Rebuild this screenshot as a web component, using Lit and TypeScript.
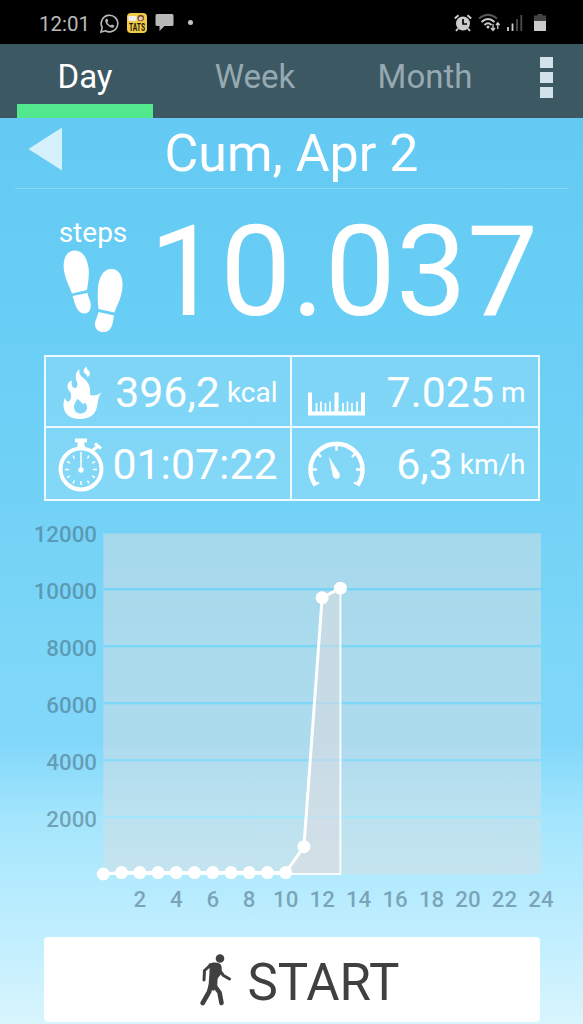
import { LitElement, html, svg, css } from 'lit';
import { customElement, property, state } from 'lit/decorators.js';
import { classMap } from 'lit/directives/class-map.js';

const TABS = ['Day', 'Week', 'Month'];

const ICONS = {
    fire: svg`
        <path fill="#fff" fill-rule="evenodd" d="M33.500 12C32.500 17 35 19 38 21.500C42 25 45 29 44 38C48 39 52 38 55.700 35.500C52.500 39 52 43 51.500 47C50.500 57 44 62 34 62C23 62 17.500 56 17.500 48C17.500 45 18 43 19 40.700C19.500 43 20.500 44.500 22 44.500C24.500 44 25.500 41 25 37C24.500 34 21.500 33 21.500 29.500C21.500 26 23.500 24.500 26 23.500C25 27 26 30.500 28.500 31C31.500 31 32 28 31 25C28.500 20 29.500 15 33.500 12ZM31 42C30.500 45 28 46 28 50C28 54 30.500 56.500 34.500 56.500C38.500 56.500 41 54 41 50.500C41 48 40 46.500 38.500 45.500C38 47 37 47.500 36 46.500C35 44.500 33.500 43 31 42Z"/>
        <path fill="#fff" d="M40.500 9.500C37 12 37 15 39.500 17C41 18.200 41.500 19 41.500 20.500C44.500 18 44.500 15.500 42.500 13.500C41 12 40.500 11 40.500 9.500Z"/>`,
    ruler: svg`
        <path d="M18 35.500V56.500H71V35.500M44.500 35.500V56" fill="none" stroke="#fff" stroke-width="4"/>
        <path d="M24.500 46v10M29 44.500v11M33.500 46v10M38 44.500v11M51 46v10M55.500 44.500v11M60 46v10M65 44.500v11" fill="none" stroke="#fff" stroke-width="1.700"/>`,
    watch: svg`
        <circle cx="35" cy="40" r="20.500" fill="none" stroke="#fff" stroke-width="4"/>
        <path d="M29 9.500h12v4h-3l1 5h-8l1-5h-3z" fill="#fff"/>
        <path d="M46 22l6-5M49 14.500l6 5" stroke="#fff" stroke-width="3" fill="none"/>
        <path d="M35 23v17M35 56v-4M19 40.500h4M51 40.500h-4M27 26.500l1.500 3M43 26.500l-1.500 3M27 54.500l1.500-3M43 54.500l-1.500-3M21 32.500l3 1.700M49 32.500l-3 1.700M21 48.500l3-1.700M49 48.500l-3-1.700" stroke="#fff" stroke-width="1.500" fill="none"/>
        <circle cx="35" cy="41" r="2.700" fill="#fff"/>`,
    gauge: svg`
        <path d="M23.500 56A26 26 0 1 1 65.500 56" fill="none" stroke="#fff" stroke-width="4.500"/>
        <path d="M44.500 15.500v6M25 23.500l4 4.500M64 23.500l-4 4.500M18 40.500h7M71 40.500h-7M21 56.500l6-3M68 56.500l-6-3" stroke="#fff" stroke-width="2.500" fill="none"/>
        <path d="M36.800 27.500l10.700 17c2 5-4 7.500-6.500 3z" fill="#fff"/>`,
};

interface IStat {
    icon: keyof typeof ICONS;
    value: string;
    unit: string;
}

@customElement('status-bar')
export class StatusBar extends LitElement {
    static override styles = css`
        :host {
            display: flex;
            align-items: center;
            height: 44px;
            padding: 2px 37px 0 39px;
            box-sizing: border-box;
            background: #000;
            color: #b9b9b9;
            font: 20.5px/42px Roboto, sans-serif;
        }
        .time {
            width: 61px;
            padding-top: 2px;
        }
        svg {
            flex: none;
            display: block;
            overflow: visible;
        }
        .badge {
            font: bold 10px Roboto, sans-serif;
        }
        .gap {
            margin-left: 8px;
        }
        .gap-s {
            margin-left: 7px;
        }
        .fill {
            flex: 1;
        }
    `;

    override render() {
        return html`
            <span class="time">12:01</span>
            <svg width="19" height="19" viewBox="0 0 19 19">
                <path d="M1 18l1.200-4.400A8.300 8.300 0 1 1 5.400 16.800z" fill="none" stroke="#b9b9b9" stroke-width="1.600"/>
                <path d="M6.300 4.800c-2 1.300-.8 4.300 1.400 6.500s5 3.400 6.400 1.500c.4-.7.300-1.200 0-1.400l-2-1c-.6-.2-1 1.100-1.500 1-1.400-.5-2.600-1.700-3.200-3 0-.5 1-1 .8-1.600l-.8-1.800c-.2-.4-.8-.4-1.100-.2z" fill="#b9b9b9"/>
            </svg>
            <svg class="gap" width="20" height="20" viewBox="0 0 20 20">
                <rect width="20" height="20" rx="4" fill="#f0cb4a"/>
                <path d="M1.500 3h8v5h-8z" fill="#eee"/>
                <circle cx="13.700" cy="5" r="3.300" fill="#7d5230"/>
                <circle cx="13.700" cy="5.500" r="1.900" fill="#e9cfc0"/>
                <text class="badge" x="2" y="17.500" textLength="16" lengthAdjust="spacingAndGlyphs" fill="#1c1608">TATS</text>
            </svg>
            <svg class="gap" width="19" height="18" viewBox="0 0 19 18">
                <path d="M2 0h15q1.500 0 1.500 1.500v9q0 1.500-1.500 1.500H9.500L4.500 17V12H2Q.5 12 .5 10.500v-9Q.5 0 2 0z" fill="#b9b9b9"/>
            </svg>
            <svg width="34" height="18" viewBox="0 0 34 18"><circle cx="16.500" cy="8.500" r="2.500" fill="#c4c4c4"/></svg>
            <span class="fill"></span>
            <svg width="18" height="18" viewBox="0 0 18 18">
                <circle cx="9" cy="9.500" r="7" fill="#ccc"/>
                <path d="M9 5v5h4" fill="none" stroke="#000" stroke-width="1.700"/>
                <path d="M.8 4.500L4.500 1.200M17.200 4.500L13.500 1.200M4 14.500l-2 2.500M14 14.500l2 2.500" stroke="#ccc" stroke-width="2"/>
            </svg>
            <svg class="gap-s" width="21" height="18" viewBox="0 0 21 18">
                <path d="M0 4.500Q9 -3 18 4.500" fill="none" stroke="#555" stroke-width="1.800"/>
                <path d="M2.500 8Q9 2 15.500 8M5.500 11Q9 7.500 12.500 11" fill="none" stroke="#ccc" stroke-width="1.800"/>
                <circle cx="9" cy="13" r="1.500" fill="#ccc"/>
                <path d="M14 10v6M12 14l2 2.500 2-2.500M18.800 15V9M17 11l1.800-2.300L20.600 11" fill="none" stroke="#ccc" stroke-width="1.300"/>
            </svg>
            <svg class="gap-s" width="16" height="18" viewBox="0 0 16 18">
                <path d="M1 17v-4M5.500 17V9.500" stroke="#ccc" stroke-width="1.800"/>
                <path d="M10 17V5M14.300 17V1" stroke="#4c4c4c" stroke-width="1.800"/>
            </svg>
            <svg class="gap-s" width="16" height="18" viewBox="0 0 16 18">
                <path d="M7.500 0h5v1.500H16V8H4V1.500h3.500z" fill="#444"/>
                <path d="M4 7h12v10H4z" fill="#ccc"/>
            </svg>
        `;
    }
}

@customElement('stat-cell')
export class StatCell extends LitElement {
    static override styles = css`
        :host {
            display: flex;
            align-items: center;
            justify-content: space-between;
            padding-right: 12.5px;
            color: #fff;
            background: rgba(255, 255, 255, 0.13);
            font-family: Roboto, sans-serif;
            overflow: hidden;
        }
        svg {
            flex: none;
            width: 66px;
            height: 70px;
            overflow: visible;
        }
        .value {
            font-size: 42.8px;
            line-height: 60px;
            padding-top: 1px;
            white-space: nowrap;
        }
        .unit {
            font-size: 28px;
            line-height: 30px;
            margin-left: 7px;
            vertical-align: 5px;
        }
    `;

    @property({ attribute: false }) stat: IStat;

    override render() {
        const { icon, value, unit } = this.stat;
        return html`
            <svg viewBox="0 0 66 70">${ICONS[icon]}</svg>
            <div class="value">${value}${unit ? html`<span class="unit">${unit}</span>` : null}</div>
        `;
    }
}

@customElement('steps-chart')
export class StepsChart extends LitElement {
    static override styles = css`
        :host {
            display: block;
        }
        svg {
            display: block;
        }
        .band {
            fill: rgba(212, 223, 227, 0.52);
        }
        .area {
            fill: rgba(226, 220, 224, 0.5);
        }
        .frame {
            fill: none;
            stroke: rgba(255, 255, 255, 0.88);
            stroke-width: 2;
        }
        .line {
            fill: none;
            stroke: #fff;
            stroke-width: 3;
        }
        .dot {
            fill: #fff;
        }
        .label {
            font: 500 22.3px Roboto, sans-serif;
            fill: rgba(68, 102, 122, 0.53);
        }
        .end {
            text-anchor: end;
        }
        .mid {
            text-anchor: middle;
        }
    `;

    @property({ attribute: false }) points: number[] = [];

    private left = 103.3;
    private right = 541;
    private base = 373;

    private x(hour: number) {
        return this.left + (hour * (this.right - this.left)) / 24;
    }

    private y(steps: number) {
        return this.base - steps * 0.02848;
    }

    override render() {
        const pts = this.points.map((p, i) => [this.x(i), this.y(p)]);
        const line = pts.map((p) => p.join(',')).join(' ');
        const last = pts[pts.length - 1][0];
        const bands = [12000, 10000, 8000, 6000, 4000, 2000];
        const hours = [2, 4, 6, 8, 10, 12, 14, 16, 18, 20, 22, 24];

        return html`
            <svg width="583" height="436" viewBox="0 0 583 436">
                ${bands.map((v) => svg`
                    <rect class="band" x=${this.left} y=${this.y(v) + 1.2}
                        width=${this.right - this.left} height=${v === 2000 ? 56 : 54.6}></rect>
                    <text class="label end" x="97" y=${this.y(v) + 9.5}>${v}</text>
                `)}
                ${hours.map((h) => svg`<text class="label mid" x=${this.x(h)} y="406">${h}</text>`)}
                <polygon class="area" points="${line} ${last},${this.base}"></polygon>
                <polyline class="frame" points="${this.left},${this.base} ${last},${this.base} ${last},${pts[pts.length - 1][1]}"></polyline>
                <polyline class="line" points=${line}></polyline>
                ${pts.map((p) => svg`<circle class="dot" cx=${p[0]} cy=${p[1]} r="6.500"></circle>`)}
            </svg>
        `;
    }
}

@customElement('app-root')
export class AppRoot extends LitElement {
    static override styles = css`
        :host {
            display: block;
            width: 583px;
            height: 1024px;
            overflow: hidden;
            color: #fff;
            font-family: Roboto, sans-serif;
            background: linear-gradient(#64caf3 118px, #69cef5 320px, #73d2f6 520px, #7dd7f8 660px, #81d7fa 740px, #a4e6fd 820px, #bdedfe 920px, #d8f5fd 1024px);
        }
        .tabs {
            display: flex;
            height: 73.5px;
            background: #3c5963;
        }
        .tab {
            width: 170px;
            display: flex;
            flex-direction: column;
            justify-content: space-between;
            text-align: center;
            font-size: 33px;
            line-height: 65px;
            color: #96a9b2;
            cursor: pointer;
        }
        .tab.active {
            color: #fff;
        }
        .tab.active::after {
            content: '';
            height: 14px;
            margin: -6px 17px 0;
            background: #52e88e;
        }
        .menu {
            display: flex;
            flex-direction: column;
            gap: 4px;
            padding: 13px 0 0 30px;
        }
        .menu i {
            width: 13px;
            height: 11px;
            background: #d2e2ea;
        }
        .date {
            display: grid;
            grid-template-columns: 47px 1fr 47px;
            align-items: center;
            height: 70px;
            margin: 0 15px;
            border-bottom: 1px solid rgba(255, 255, 255, 0.25);
            font-size: 52px;
            line-height: 68px;
            text-align: center;
        }
        .date span {
            padding-top: 2px;
        }
        .prev {
            margin: -7px 0 0 13px;
        }
        .summary {
            display: flex;
            height: 166.5px;
        }
        .steps {
            width: 78px;
            padding: 27px 0 0 54px;
            text-align: center;
            font-size: 28px;
            line-height: 34px;
        }
        .steps svg {
            display: block;
        }
        .count {
            flex: 1;
            padding-right: 45px;
            font-size: 126.5px;
            line-height: 167px;
            text-align: right;
        }
        .stats {
            display: grid;
            grid-template-columns: 244px 246px;
            grid-template-rows: 69px 71px;
            gap: 2px;
            width: 492px;
            margin-left: 44px;
            border: 2px solid rgba(255, 255, 255, 0.88);
            background:
                linear-gradient(rgba(255, 255, 255, 0.88), rgba(255, 255, 255, 0.88)) 0 69px / 100% 2px no-repeat,
                linear-gradient(rgba(255, 255, 255, 0.88), rgba(255, 255, 255, 0.88)) 244px 0 / 2px 100% no-repeat;
            background-origin: padding-box;
            background-clip: padding-box;
        }
        .start {
            display: flex;
            align-items: center;
            width: 496px;
            height: 85px;
            margin-left: 44px;
            padding: 0 0 0 154px;
            box-sizing: border-box;
            border: 0;
            border-radius: 4px;
            background: #fff;
            color: #404040;
            font: 51px/85px Roboto, sans-serif;
        }
        .start span {
            margin: 5px 0 0 15.5px;
        }
    `;

    @state() private active = 0;

    private stats: IStat[] = [
        { icon: 'fire', value: '396,2', unit: 'kcal' },
        { icon: 'ruler', value: '7.025', unit: 'm' },
        { icon: 'watch', value: '01:07:22', unit: '' },
        { icon: 'gauge', value: '6,3', unit: 'km/h' },
    ];

    private points = [0, 50, 50, 50, 50, 50, 50, 50, 50, 50, 50, 960, 9700, 10037];

    override render() {
        return html`
            <status-bar></status-bar>
            <nav class="tabs">
                ${TABS.map((tab, i) => html`
                    <div class=${classMap({ tab: true, active: i === this.active })} @click=${() => (this.active = i)}>${tab}</div>
                `)}
                <div class="menu"><i></i><i></i><i></i></div>
            </nav>
            <div class="date">
                <svg class="prev" width="34" height="44" viewBox="0 0 34 44">
                    <path d="M.5 22L34 .5v43z" fill="#fff" fill-opacity=".72"/>
                </svg>
                <span>Cum, Apr 2</span>
            </div>
            <div class="summary">
                <div class="steps">
                    steps
                    <svg width="78" height="84" viewBox="0 0 78 84">
                        <g fill="#fff">
                            <path d="M9.700 18C9 8 13 1 20 .500c9-.5 13 8 14.500 17 1 9-.5 15-1.500 22.500l-15 3.500C15 35 10.500 28 9.700 18z"/>
                            <path d="M18.500 46l15-3c1 5 3.500 8 3.300 13-.3 5-3 7.500-6.500 7.500-7 0-9-8.500-11.800-17.500z"/>
                            <path d="M44 38c1-11 5-19 13.500-19 8 0 11.500 8 11 17-.5 11-5 18-8 26.500l-16-3.500c-1-7-1-14-.5-21z"/>
                            <path d="M44.500 62l15.500 3.500c-1 7-2 16-9.500 16.500-5 .5-9-2-9.500-7-.3-4 2.500-8 3.500-13z"/>
                        </g>
                    </svg>
                </div>
                <div class="count">10.037</div>
            </div>
            <div class="stats">
                ${this.stats.map((s) => html`<stat-cell .stat=${s}></stat-cell>`)}
            </div>
            <steps-chart .points=${this.points}></steps-chart>
            <button class="start">
                <svg width="34" height="52" viewBox="0 0 34 52">
                    <g fill="none" stroke="#404040" stroke-linecap="round" stroke-linejoin="round">
                        <path d="M12 11.500L6.500 16.500L6 26" stroke-width="3"/>
                        <path d="M22 17L25.500 21.500L31.500 25" stroke-width="3"/>
                        <path d="M13 31L11 38L4.700 49" stroke-width="4.600"/>
                        <path d="M16 31L21.500 38.500L23.500 49" stroke-width="4.600"/>
                    </g>
                    <circle cx="22" cy="4.500" r="4.300" fill="#404040"/>
                    <path d="M10.500 10c3-1.500 8-2 11-.5 2.500 1.500 2.500 5 2 9.500-1 3-3.800 4-4 7l-.3 7.500-4 3.500-4.500-4c0-8 1-12 .8-18z" fill="#404040"/>
                </svg>
                <span>START</span>
            </button>
        `;
    }
}
